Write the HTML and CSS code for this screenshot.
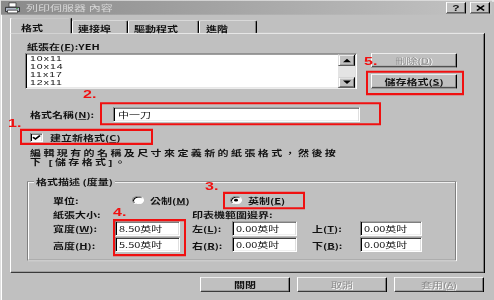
FILE: index.html
```html
<!DOCTYPE html>
<html lang="zh-Hant">
  <head>
    <meta charset="UTF-8" />
    <title>列印伺服器 內容</title>
    <link rel="stylesheet" href="styles.css">
  </head>
  <body>
    <div class="screen">
      <div class="window">
        <!-- Barra del titolo -->
        <div class="titlebar">
          <svg class="title-icon" viewBox="0 0 17 17">
            <path d="M5 1h7v6H5z" fill="#fff" stroke="#404040" />
            <path d="M1.5 7.5h14v6h-14z" fill="#b0b8c8" stroke="#202020" />
            <path d="M3.5 11.5h10v4h-10z" fill="#fff" stroke="#404040" />
            <path d="M12 9h2" stroke="#3a9a3a" />
          </svg>
          <span class="title-text">列印伺服器 內容</span>
          <div class="title-buttons">
            <span class="tbtn">?</span>
            <span class="tbtn">
              <svg viewBox="0 0 10 10" width="9" height="9">
                <path d="M1 1l8 8M9 1l-8 8" stroke="#000" stroke-width="2" />
              </svg>
            </span>
          </div>
        </div>

        <div class="tabs">
          <div class="tab active">格式</div>
          <div class="tab w-port">連接埠</div>
          <div class="tab w-driver">驅動程式</div>
          <div class="tab w-adv">進階</div>
        </div>

        <div class="panel">
          <div class="form-label">紙張在(<u>F</u>):YEH</div>

          <div class="list-row">
            <div class="listbox">
              <div class="list-items">
                <div>10x11</div>
                <div>10x14</div>
                <div>11x17</div>
                <div>12x11</div>
              </div>
              <div class="scrollbar">
                <span class="sb-btn"><i class="arrow-up"></i></span>
                <span class="sb-track"></span>
                <span class="sb-btn down"><i class="arrow-down"></i></span>
              </div>
            </div>
            <div class="side-buttons">
              <div class="btn disabled">刪除(<u>D</u>)</div>
              <div class="btn">儲存格式(<u>S</u>)</div>
            </div>
          </div>

          <div class="name-row">
            <span class="name-label">格式名稱(<u>N</u>):</span>
            <div class="field name-field">中一刀</div>
          </div>

          <div class="check-row">
            <span class="checkbox">
              <svg viewBox="0 0 9 9" width="9" height="9">
                <path d="M1 4l2.5 2.5L8 1.5" fill="none" stroke="#000" stroke-width="2" />
              </svg>
            </span>
            <span>建立新格式(<u>C</u>)</span>
          </div>

          <p class="hint">編輯現有的名稱及尺寸來定義新的紙張格式，然後按<br>下 [儲存格式]。</p>

          <fieldset class="group">
            <legend>格式描述 (度量)</legend>
            <div class="units-grid">
              <span>單位:</span>
              <span class="radio-cell metric"><i class="radio"></i><span>公制(<u>M</u>)</span></span>
              <span class="radio-cell imperial"><i class="radio checked"></i><span>英制(<u>E</u>)</span></span>

              <span class="span-2">紙張大小:</span>
              <span class="span-4 pad-l">印表機範圍邊界:</span>

              <span>寬度(<u>W</u>):</span>
              <div class="field">8.50英吋</div>
              <span class="pad-l">左(<u>L</u>):</span>
              <div class="field">0.00英吋</div>
              <span class="pad-r">上(<u>T</u>):</span>
              <div class="field">0.00英吋</div>

              <span>高度(<u>H</u>):</span>
              <div class="field">5.50英吋</div>
              <span class="pad-l">右(<u>R</u>):</span>
              <div class="field">0.00英吋</div>
              <span class="pad-r">下(<u>B</u>):</span>
              <div class="field">0.00英吋</div>
            </div>
          </fieldset>
        </div>

        <div class="footer">
          <div class="btn wide">關閉</div>
          <div class="btn wide disabled">取消</div>
          <div class="btn wide disabled">套用(<u>A</u>)</div>
        </div>

        <!-- Annotazioni rosse sopra il dialogo -->
        <span class="num n1">1.</span>
        <span class="num n2">2.</span>
        <span class="num n3">3.</span>
        <span class="num n4">4.</span>
        <span class="num n5">5.</span>
        <div class="mark m1"></div>
        <div class="mark m2"></div>
        <div class="mark m3"></div>
        <div class="mark m4"></div>
        <div class="mark m5"></div>
      </div>
    </div>
  </body>
</html>
```

FILE: styles.css
```css
* {
  box-sizing: border-box;
}

html,
body {
  margin: 0;
  padding: 0;
  overflow: hidden;
}

body {
  width: 494px;
  height: 300px;
  background: #c0c0c0;
  font-family: "Noto Sans CJK TC", "Liberation Sans", sans-serif;
  font-size: 11px;
  font-weight: bold;
  line-height: 12px;
  color: #111;
}

u {
  text-decoration: underline;
}

.screen {
  width: 494px;
  height: 300px;
  overflow: hidden;
}

/* Il dialogo viene schiacciato in verticale come nello screenshot */
.window {
  position: relative;
  width: 494px;
  height: 429px;
  margin-bottom: -129px;
  padding-top: 1px;
  background: #c0c0c0;
  box-shadow: inset 1px 1px #dfdfdf, inset 2px 2px #fff;
  transform: scaleY(0.7);
  transform-origin: 0 0;
}

/* Barra del titolo */
.titlebar {
  display: flex;
  align-items: center;
  height: 20px;
  margin: 0 2px 0 1px;
  padding: 0 2px 0 3px;
  background: linear-gradient(to right, #8a8a8a, #c4c4c4);
}

.title-icon {
  width: 17px;
  height: 17px;
  flex: none;
}

.title-text {
  margin-left: 5px;
  color: #d8d8d8;
  font-size: 12px;
  font-weight: normal;
}

.title-buttons {
  display: flex;
  gap: 4px;
  margin-left: auto;
}

.tbtn {
  display: flex;
  align-items: center;
  justify-content: center;
  width: 20px;
  height: 16px;
  background: #c0c0c0;
  border: 1px solid;
  border-color: #fff #000 #000 #fff;
  box-shadow: inset -1px -1px #808080;
  font: bold 12px "Liberation Sans", sans-serif;
}

/* Schede */
.tabs {
  position: relative;
  z-index: 1;
  display: flex;
  align-items: flex-end;
  height: 26px;
  margin-left: 10px;
}

.tab {
  height: 18px;
  padding: 5px 0 0 5px;
  border-top: 1px solid #fff;
  border-left: 1px solid #fff;
  border-right: 1px solid #000;
  border-radius: 2px 2px 0 0;
  box-shadow: inset -1px 0 #808080;
  background: #c0c0c0;
}

.tab.active {
  width: 62px;
  height: 23px;
  margin-bottom: -1px;
  padding: 7px 0 0 10px;
}

.w-port {
  width: 56px;
}

.w-driver {
  width: 71px;
}

.w-adv {
  width: 58px;
  padding-left: 6px;
}

/* Pannello principale */
.panel {
  height: 343px;
  margin: 0 9px 0 10px;
  padding: 12px 0 0 14px;
  border: 1px solid;
  border-color: #fff #000 #000 #fff;
  box-shadow: inset -1px -1px #808080;
}

.form-label {
  padding-left: 2px;
}

.list-row {
  display: flex;
  margin-top: 4px;
}

.listbox {
  display: flex;
  width: 332px;
  height: 51px;
  padding: 1px;
  border: 1px solid;
  border-color: #808080 #fff #fff #808080;
  box-shadow: inset 1px 1px #000, inset -1px -1px #dfdfdf;
}

.list-items {
  flex: 1;
  padding: 0 3px;
  background: #fff;
  font-family: "Liberation Sans", sans-serif;
  font-size: 10.5px;
  font-weight: normal;
  letter-spacing: 1px;
  line-height: 11.6px;
}

.scrollbar {
  display: flex;
  flex-direction: column;
  width: 17px;
}

.sb-btn {
  display: flex;
  align-items: center;
  justify-content: center;
  height: 16px;
  background: #c0c0c0;
  border: 1px solid;
  border-color: #dfdfdf #000 #000 #dfdfdf;
  box-shadow: inset 1px 1px #fff, inset -1px -1px #808080;
}

.sb-btn.down {
  height: 15px;
}

.sb-track {
  flex: 1;
  background: #e4e4e4;
}

.arrow-up,
.arrow-down {
  width: 0;
  height: 0;
  border-left: 4px solid transparent;
  border-right: 4px solid transparent;
}

.arrow-up {
  border-bottom: 5px solid #000;
}

.arrow-down {
  border-top: 5px solid #000;
}

.side-buttons {
  display: flex;
  flex-direction: column;
  gap: 10px;
  width: 86px;
  margin-left: 14px;
}

.btn {
  display: flex;
  align-items: center;
  justify-content: center;
  height: 20px;
  background: #c0c0c0;
  border: 1px solid;
  border-color: #fff #000 #000 #fff;
  box-shadow: inset -1px -1px #808080;
}

.btn.disabled {
  color: #8a8a8a;
  font-weight: normal;
  text-shadow: 1px 1px #fff;
}

.btn.wide {
  width: 90px;
  height: 21px;
}

/* Campi di testo */
.field {
  height: 21px;
  padding: 3px 0 0 3px;
  background: #fff;
  border: 1px solid;
  border-color: #808080 #fff #fff #808080;
  box-shadow: inset 1px 1px #000, inset -1px -1px #dfdfdf;
  font-weight: normal;
  white-space: nowrap;
}

.name-row {
  display: flex;
  align-items: center;
  margin-top: 26px;
}

.name-label {
  width: 88px;
  padding-left: 5px;
}

.name-field {
  width: 247px;
  padding-left: 4px;
}

.check-row {
  display: flex;
  align-items: center;
  gap: 7px;
  margin-top: 16px;
  padding-left: 5px;
}

.checkbox {
  display: flex;
  align-items: center;
  justify-content: center;
  width: 13px;
  height: 13px;
  background: #fff;
  border: 1px solid;
  border-color: #808080 #fff #fff #808080;
  box-shadow: inset 1px 1px #000, inset -1px -1px #dfdfdf;
}

.hint {
  margin: 10px 0 0;
  padding-left: 5px;
  font-family: "Liberation Sans", "Noto Sans CJK TC", sans-serif;
  line-height: 12.6px;
  letter-spacing: 2.4px;
}

/* Gruppo formato */
.group {
  width: 429px;
  margin: 15px 0 0 2px;
  padding: 0;
  border: 1px solid #808080;
  box-shadow: inset 1px 1px #fff, 1px 1px #fff;
}

.group legend {
  margin-left: 6px;
  padding: 0 2px;
  line-height: 13px;
  background: #c0c0c0;
}

.units-grid {
  display: grid;
  grid-template-columns: 62px 65px 52px 65px 63px 62px;
  grid-template-rows: 21px 16px 21px 21px;
  row-gap: 2px;
  align-items: center;
  margin: 9px 0 11px 25px;
}

.span-2 {
  grid-column: span 2;
}

.span-4 {
  grid-column: span 4;
}

.pad-l {
  padding-left: 12px;
}

.pad-r {
  padding-left: 15px;
}

.radio-cell {
  display: flex;
  align-items: center;
  gap: 6px;
}

.radio-cell.metric {
  grid-column: span 2;
  padding-left: 17px;
}

.radio-cell.imperial {
  grid-column: span 3;
  margin-left: -2px;
}

.radio {
  display: flex;
  align-items: center;
  justify-content: center;
  width: 12px;
  height: 12px;
  border-radius: 50%;
  background: #fff;
  border: 1px solid;
  border-color: #808080 #fff #fff #808080;
  box-shadow: inset 1px 1px #000;
}

.radio.checked::after {
  content: "";
  width: 4px;
  height: 4px;
  border-radius: 50%;
  background: #000;
}

/* Pulsanti in basso */
.footer {
  display: flex;
  justify-content: flex-end;
  gap: 7px;
  margin-top: 6px;
  padding-right: 10px;
}

/* Annotazioni rosse */
.num {
  position: absolute;
  font: bold 16px/16px "Liberation Sans", sans-serif;
  color: #f01010;
}

.n1 {
  left: 8px;
  top: 168px;
}

.n2 {
  left: 83px;
  top: 127px;
}

.n3 {
  left: 205px;
  top: 259px;
}

.n4 {
  left: 113px;
  top: 295px;
}

.n5 {
  left: 364px;
  top: 80px;
}

.mark {
  position: absolute;
  border: solid #f01010;
  border-width: 3px 2px;
}

.m1 {
  left: 20px;
  top: 184px;
  width: 133px;
  height: 23px;
}

.m2 {
  left: 100px;
  top: 146px;
  width: 281px;
  height: 33px;
}

.m3 {
  left: 223px;
  top: 274px;
  width: 82px;
  height: 25px;
}

.m4 {
  left: 113px;
  top: 313px;
  width: 73px;
  height: 53px;
}

.m5 {
  left: 366px;
  top: 101px;
  width: 98px;
  height: 35px;
}
```
